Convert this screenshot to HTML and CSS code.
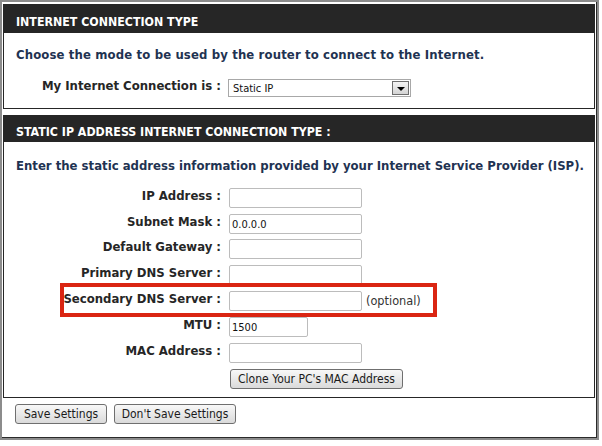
FILE: index.html
```html
<!DOCTYPE html>
<html>
<head>
<meta charset="utf-8">
<link rel="stylesheet" href="styles.css">
</head>
<body>
<div class="frame">
  <div class="inner">
    <section class="box box1">
      <h2 class="bar bar1">INTERNET CONNECTION TYPE</h2>
      <div class="body1">
        <p class="intro intro1">Choose the mode to be used by the router to connect to the Internet.</p>
        <div class="selrow">
          <span class="lbl lbl-sel">My Internet Connection is :</span>
          <div class="select">
            <span class="seltext">Static IP</span>
            <span class="selbtn"><span class="tri"></span></span>
          </div>
        </div>
      </div>
    </section>
    <section class="box box2">
      <h2 class="bar bar2">STATIC IP ADDRESS INTERNET CONNECTION TYPE :</h2>
      <div class="body2">
        <p class="intro">Enter the static address information provided by your Internet Service Provider (ISP).</p>
        <div class="frow"><span class="lbl">IP Address :</span><span class="inp"></span></div>
        <div class="frow"><span class="lbl">Subnet Mask :</span><span class="inp">0.0.0.0</span></div>
        <div class="frow"><span class="lbl">Default Gateway :</span><span class="inp"></span></div>
        <div class="frow"><span class="lbl">Primary DNS Server :</span><span class="inp"></span></div>
        <div class="frow hl"><span class="lbl">Secondary DNS Server :</span><span class="inp"></span><span class="opt">(optional)</span><span class="mark"></span></div>
        <div class="frow"><span class="lbl">MTU :</span><span class="inp inp-mtu">1500</span></div>
        <div class="frow"><span class="lbl">MAC Address :</span><span class="inp"></span></div>
        <div class="clonerow"><span class="btn btn-clone">Clone Your PC's MAC Address</span></div>
      </div>
    </section>
    <div class="actions">
      <span class="btn btn-save">Save Settings</span>
      <span class="btn btn-dont">Don't Save Settings</span>
    </div>
  </div>
</div>
</body>
</html>
```
FILE: styles.css
```css
body {
  margin: 0;
  background: #fff;
  font-family: "DejaVu Sans Condensed", "DejaVu Sans", sans-serif;
}
.frame {
  width: 599px;
  height: 440px;
  box-sizing: border-box;
  border: 2px solid #8c8c8c;
}
.inner {
  height: 100%;
  box-sizing: border-box;
  border-right: 1px solid #2a2a2a;
  border-bottom: 1px solid #2a2a2a;
  padding: 2px 0 0 1px;
}
.box {
  width: 592px;
  box-sizing: border-box;
  border: 1px solid #262626;
}
.box2 {
  margin-top: 6px;
}
.bar {
  margin: 0;
  background: #262626;
  color: #fff;
  font-size: 12.3px;
  font-weight: bold;
  line-height: 14px;
  padding-left: 12px;
  box-sizing: border-box;
}
.bar1 {
  height: 28px;
  padding-top: 10px;
}
.bar2 {
  height: 26px;
  padding-top: 9px;
}
.intro {
  margin: 0;
  padding-left: 12px;
  font-size: 13px;
  font-weight: bold;
  line-height: 16px;
  color: #1f3352;
  white-space: nowrap;
}
.intro1 {
  letter-spacing: 0.13px;
}
.body1 {
  padding: 14px 0 11px;
}
.body1 .intro {
  margin-bottom: 16px;
}
.selrow {
  display: flex;
  align-items: flex-start;
  height: 18px;
}
.lbl {
  width: 217px;
  flex: none;
  text-align: right;
  font-size: 13px;
  font-weight: bold;
  line-height: 16px;
  color: #262626;
  margin-right: 8px;
  white-space: nowrap;
}
.lbl-sel {
  line-height: 14px;
  margin-right: 7px;
}
.select {
  width: 183px;
  height: 18px;
  box-sizing: border-box;
  border: 1px solid #a8a8a8;
  display: flex;
  align-items: center;
  justify-content: space-between;
  padding: 0 1px 0 4px;
  background: #fff;
}
.seltext {
  font-size: 11px;
  color: #111;
}
.selbtn {
  width: 17px;
  height: 14px;
  box-sizing: border-box;
  border: 1px solid #6e6e6e;
  background: linear-gradient(#f4f4f4, #d4d4d4);
  display: flex;
  align-items: center;
  justify-content: center;
}
.tri {
  width: 0;
  height: 0;
  border-left: 4px solid transparent;
  border-right: 4px solid transparent;
  border-top: 4px solid #000;
  margin-top: 1px;
}
.body2 {
  padding: 16px 0 8.7px;
}
.body2 .intro {
  margin-bottom: 13.8px;
}
.frow {
  display: flex;
  align-items: flex-start;
  height: 20px;
  margin-bottom: 5.8px;
}
.frow.hl {
  position: relative;
}
.inp {
  width: 133px;
  height: 20px;
  box-sizing: border-box;
  border: 1px solid #bcbcbc;
  border-radius: 2px;
  padding-left: 2px;
  font-size: 11px;
  line-height: 20px;
  color: #111;
}
.inp-mtu {
  width: 79px;
}
.opt {
  margin-left: 4px;
  font-size: 12.6px;
  line-height: 20px;
  color: #333;
}
.mark {
  position: absolute;
  left: 56px;
  top: -8px;
  width: 377px;
  height: 34px;
  box-sizing: border-box;
  border: 4px solid #da2512;
}
.clonerow {
  padding-left: 226px;
  margin-top: 0.7px;
  height: 20px;
}
.btn {
  display: inline-flex;
  align-items: center;
  justify-content: center;
  height: 20px;
  box-sizing: border-box;
  border: 1px solid #6f6f6f;
  border-radius: 3px;
  background: linear-gradient(#f8f8f8, #dadada);
  font-size: 12px;
  color: #1a1a1a;
  white-space: nowrap;
}
.btn-clone {
  width: 173px;
}
.actions {
  display: flex;
  gap: 7px;
  padding: 6px 0 0 12px;
}
.btn-save {
  width: 92px;
}
.btn-dont {
  width: 122px;
}
```
